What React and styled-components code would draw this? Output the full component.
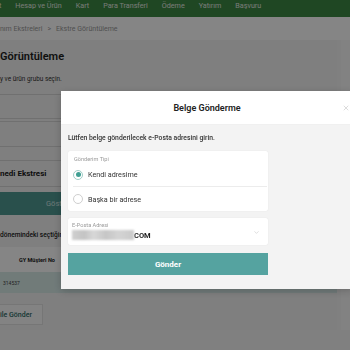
import React from 'react';
import styled, { createGlobalStyle } from 'styled-components';
import { X, ChevronDown } from 'lucide-react';

const GlobalStyle = createGlobalStyle`
    html, body {
        margin: 0;
        padding: 0;
        width: 350px;
        height: 350px;
        overflow: hidden;
        background: #f6f6f6;
        font-family: Roboto, "Liberation Sans", sans-serif;
    }
    * { box-sizing: border-box; }
`;

const Page = styled.div`
    display: flex;
    flex-direction: column;
    width: 350px;
`;

const Nav = styled.div`
    height: 17px;
    background: #3c8843;
    display: flex;
    gap: 14px;
    padding-top: 2px;
    color: #e4ebe4;
    font-size: 7.2px;
    line-height: 8px;
    white-space: nowrap;
`;

const NavItem = styled.span`
    margin-left: ${p => p.$first ? '-1px' : '0'};
`;

const Crumbs = styled.div`
    height: 23px;
    background: #fff;
    display: flex;
    align-items: center;
    gap: 5px;
    font-size: 7px;
    color: #9a9a9a;
    white-space: nowrap;
`;

const Main = styled.div`
    display: flex;
    gap: 4px;
`;

const Panel = styled.div`
    width: 337px;
    background: #f3f3f3;
    padding: 10px 0 5px;
    display: flex;
    flex-direction: column;
`;

const Side = styled.div`
    flex: 1;
    background: #fafafa;
`;

const Title = styled.div`
    font-size: 11px;
    line-height: 14px;
    font-weight: 600;
    color: #1d1d1d;
`;

const Sub = styled.div`
    margin-top: 11px;
    font-size: 6.4px;
    line-height: 8px;
    color: #333;
`;

const Field = styled.div`
    height: ${p => p.$h}px;
    margin-top: ${p => p.$mt}px;
    margin-right: 8px;
    border: 1px solid #d6d6d6;
    border-left: none;
    display: flex;
    align-items: center;
    font-size: 8px;
    font-weight: 700;
    color: #1a1a1a;
`;

const ShowButton = styled.div`
    height: 23px;
    margin-top: 5px;
    margin-right: 8px;
    background: #4f9993;
    color: #cfe6e3;
    font-size: 7.5px;
    display: flex;
    align-items: center;
    padding-left: 46px;
`;

const Note = styled.div`
    margin-top: 16px;
    font-size: 6.6px;
    line-height: 8px;
    font-weight: 500;
    color: #222;
`;

const TableHead = styled.div`
    margin-top: 8px;
    height: 25px;
    background: #fff;
    display: flex;
    align-items: center;
    padding-left: 19px;
    font-size: 5.5px;
    font-weight: 700;
    color: #222;
`;

const TableRow = styled.div`
    height: 21px;
    background: #d8ebe9;
    display: flex;
    align-items: center;
    padding-left: 3px;
    font-size: 5px;
    color: #444;
`;

const SendButton = styled.div`
    margin-top: 11px;
    width: 43px;
    height: 21px;
    background: #fbfbfb;
    border: 1px solid #e2e2e2;
    border-left: none;
    display: flex;
    align-items: center;
    font-size: 7px;
    color: #2d6a65;
    font-weight: 500;
    white-space: nowrap;
`;

const Overlay = styled.div`
    position: fixed;
    inset: 0;
    background: rgba(0, 0, 0, 0.48);
    display: flex;
    align-items: flex-start;
    padding: 91px 0 0 61px;
`;

const Modal = styled.div`
    width: 292px;
    flex-shrink: 0;
    background: #f3f3f3;
    display: flex;
    flex-direction: column;
    box-shadow: 0 2px 8px rgba(0, 0, 0, 0.2);
`;

const ModalHeader = styled.div`
    height: 34px;
    background: #fff;
    border-bottom: 1px solid #f0f0f0;
    display: grid;
    grid-template-columns: 1fr auto 1fr;
    align-items: center;
`;

const ModalTitle = styled.div`
    font-size: 9px;
    font-weight: 600;
    color: #222;
`;

const Close = styled.div`
    justify-self: end;
    padding-right: 3px;
    display: flex;
    color: #b9b9b9;
`;

const ModalBody = styled.div`
    padding: 8px 7px 14px;
    display: flex;
    flex-direction: column;
`;

const Column = styled.div`
    width: 200px;
    display: flex;
    flex-direction: column;
`;

const Intro = styled.div`
    font-size: 6.8px;
    line-height: 10px;
    font-weight: 500;
    color: #333;
`;

const Card = styled.div`
    margin-top: ${p => p.$mt}px;
    background: #fff;
    border-radius: 2px;
    box-shadow: 0 0 1px rgba(0, 0, 0, 0.12);
`;

const TypeCard = styled(Card)`
    padding: 5px 1px 0 5px;
`;

const Label = styled.div`
    font-size: 5.6px;
    line-height: 7px;
    color: #9a9a9a;
    padding-left: ${p => p.$pl || 0}px;
`;

const RadioRow = styled.div`
    height: 24px;
    display: flex;
    align-items: center;
    gap: 5px;
    font-size: 7.2px;
    color: #333;
    border-bottom: ${p => p.$last ? 'none' : '1px solid #ececec'};
`;

const Radio = styled.span`
    width: 10px;
    height: 10px;
    border-radius: 50%;
    border: 1px solid ${p => p.$on ? '#9fcdc7' : '#cfcfcf'};
    display: flex;
    align-items: center;
    justify-content: center;
    &::after {
        content: '';
        width: 5px;
        height: 5px;
        border-radius: 50%;
        background: ${p => p.$on ? '#3f9f93' : 'transparent'};
    }
`;

const EmailCard = styled(Card)`
    height: 27px;
    padding: 4px 8px 0 4px;
    display: flex;
    align-items: center;
`;

const EmailInfo = styled.div`
    flex: 1;
    display: flex;
    flex-direction: column;
    align-self: flex-start;
`;

const EmailValue = styled.div`
    display: flex;
    align-items: center;
    height: 12px;
    font-size: 7.5px;
    font-weight: 700;
    color: #222;
`;

const Blur = styled.span`
    width: 62px;
    height: 10px;
    background: linear-gradient(90deg, #cfcfcf 0%, #c4c4c4 20%, #d8d8d8 35%, #c6c6c6 55%, #d4d4d4 75%, #c9c9c9 100%);
    filter: blur(1px);
`;

const Chevron = styled.div`
    display: flex;
    color: #b5b5b5;
    margin-top: -2px;
`;

const Submit = styled.div`
    margin-top: 8px;
    height: 22px;
    background: #55a3a0;
    color: #fff;
    font-size: 8px;
    font-weight: 700;
    display: flex;
    align-items: center;
    justify-content: center;
`;

const navItems = ['t', 'Hesap ve Ürün', 'Kart', 'Para Transferi', 'Ödeme', 'Yatırım', 'Başvuru'];

function App() {
    return (
        <>
            <GlobalStyle />
            <Page>
                <Nav>
                    {navItems.map((item, i) => (
                        <NavItem key={item} $first={i === 0}>{item}</NavItem>
                    ))}
                </Nav>
                <Crumbs>
                    <span>nım Ekstreleri</span>
                    <span>&gt;</span>
                    <span>Ekstre Görüntüleme</span>
                </Crumbs>
                <Main>
                    <Panel>
                        <Title>Görüntüleme</Title>
                        <Sub>y ve ürün grubu seçin.</Sub>
                        <Field $h={25} $mt={11} />
                        <Field $h={26} $mt={2} />
                        <Field $h={27} $mt={13}>nedi Ekstresi</Field>
                        <ShowButton>Göster</ShowButton>
                        <Note>dönemindeki seçtiğin</Note>
                        <TableHead>GY Müşteri No</TableHead>
                        <TableRow>314537</TableRow>
                        <SendButton>ile Gönder</SendButton>
                    </Panel>
                    <Side />
                </Main>
            </Page>
            <Overlay>
                <Modal>
                    <ModalHeader>
                        <span />
                        <ModalTitle>Belge Gönderme</ModalTitle>
                        <Close><X size={8} strokeWidth={1.5} /></Close>
                    </ModalHeader>
                    <ModalBody>
                        <Column>
                            <Intro>Lütfen belge gönderilecek e-Posta adresini girin.</Intro>
                            <TypeCard $mt={8}>
                                <Label $pl={1}>Gönderim Tipi</Label>
                                <RadioRow>
                                    <Radio $on />
                                    Kendi adresime
                                </RadioRow>
                                <RadioRow $last>
                                    <Radio />
                                    Başka bir adrese
                                </RadioRow>
                            </TypeCard>
                            <EmailCard $mt={7}>
                                <EmailInfo>
                                    <Label>E-Posta Adresi</Label>
                                    <EmailValue>
                                        <Blur />
                                        COM
                                    </EmailValue>
                                </EmailInfo>
                                <Chevron><ChevronDown size={7} strokeWidth={1.5} /></Chevron>
                            </EmailCard>
                            <Submit>Gönder</Submit>
                        </Column>
                    </ModalBody>
                </Modal>
            </Overlay>
        </>
    );
}

export default App;
